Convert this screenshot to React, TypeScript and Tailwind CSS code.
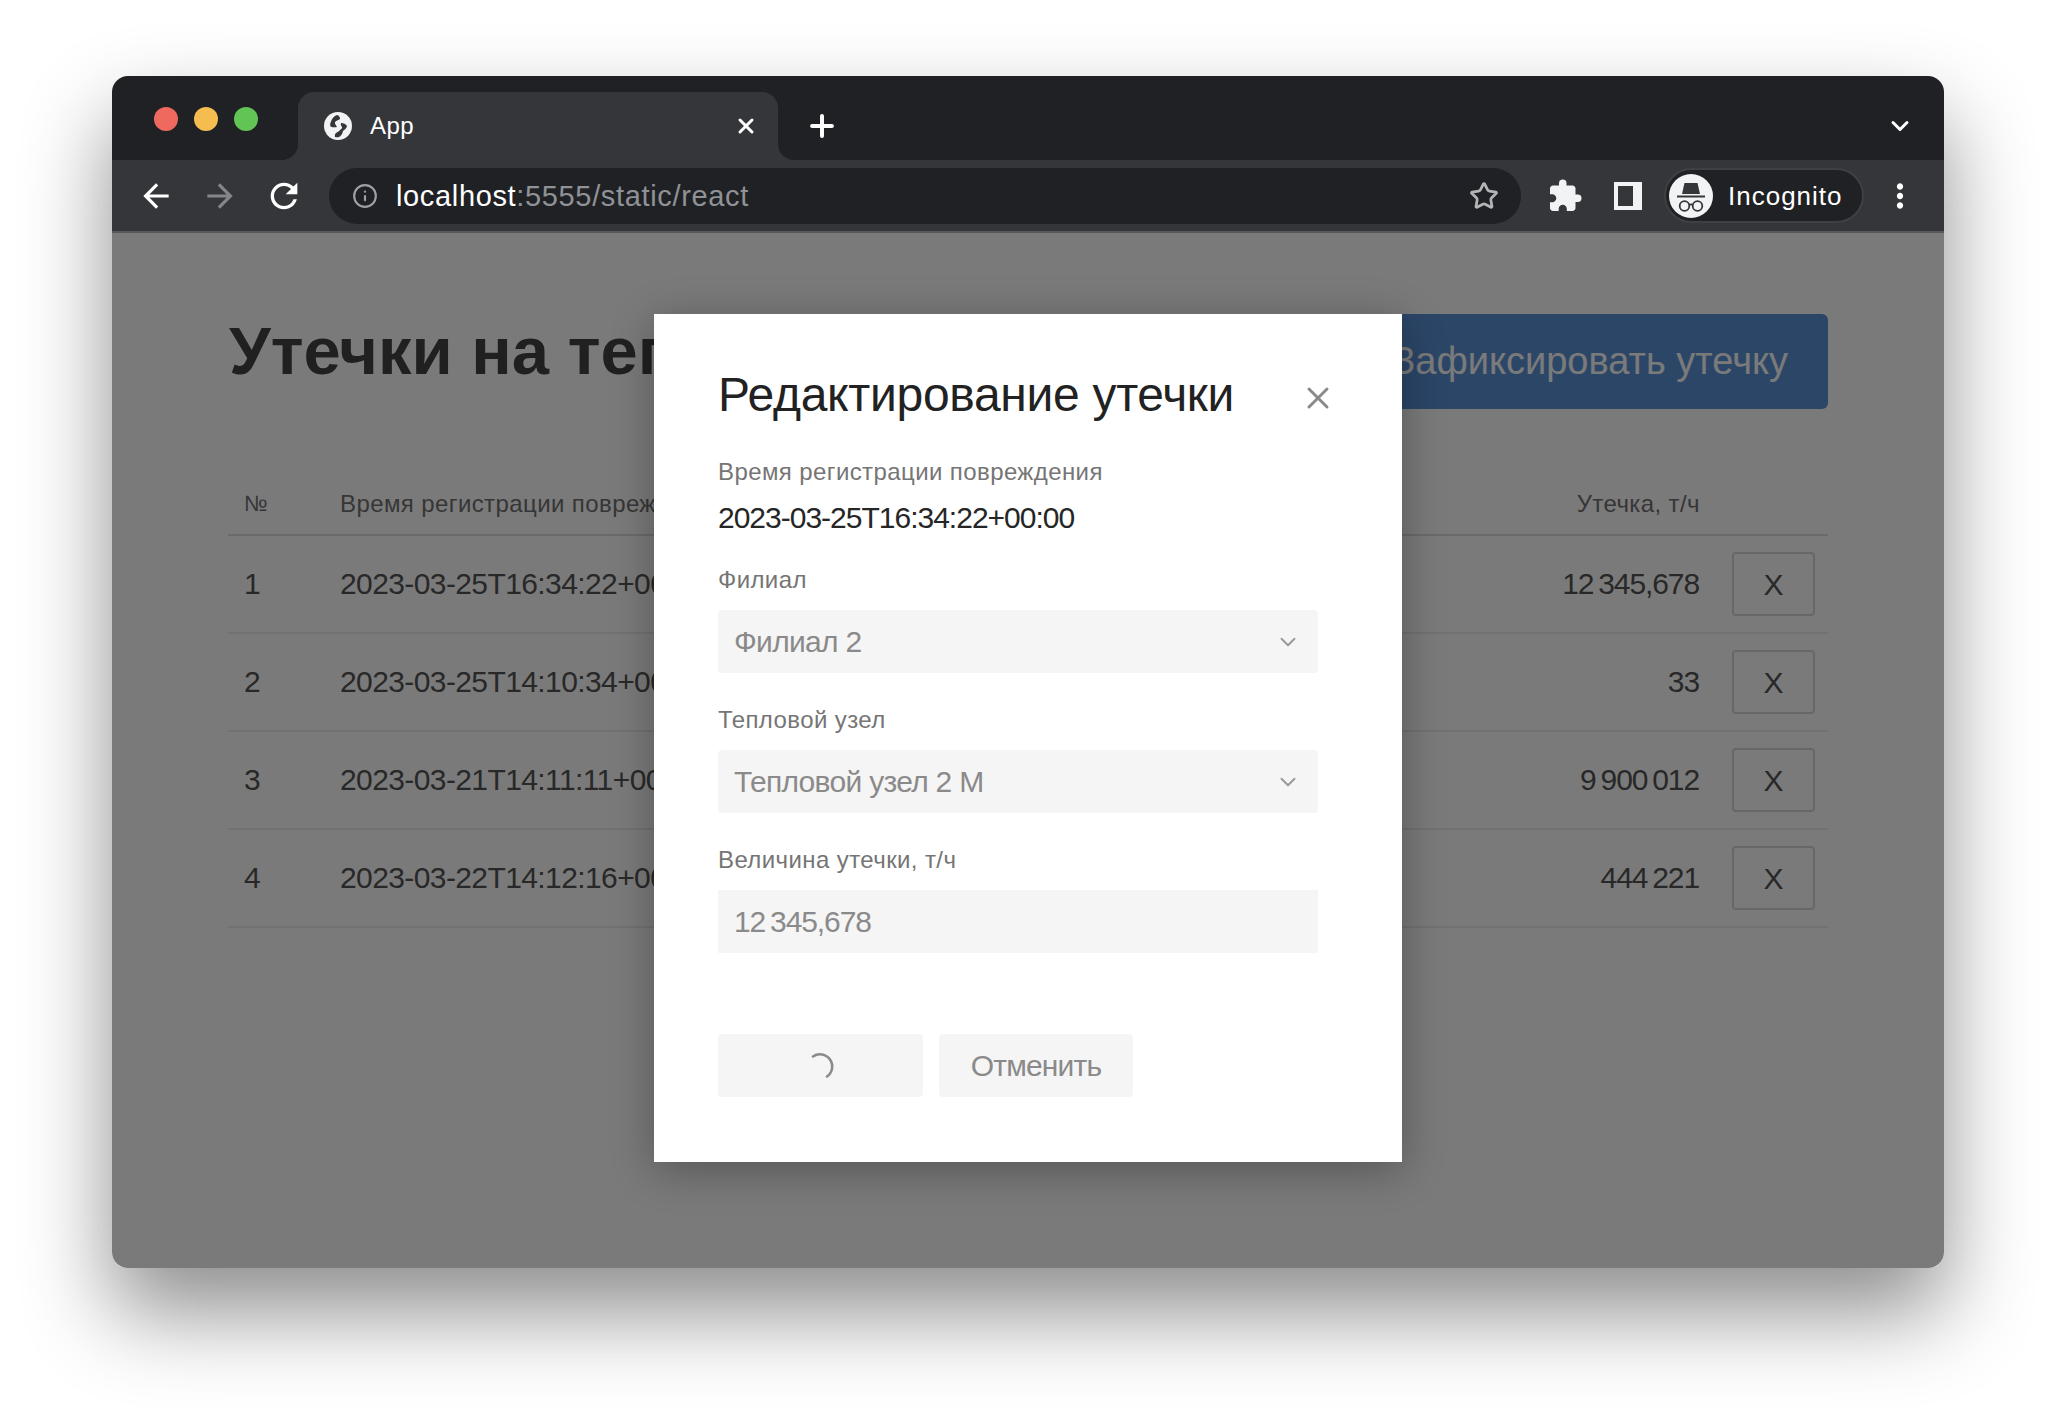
import { ChevronDown, Info, Plus, Star, X } from "lucide-react";
import { MdArrowBack, MdArrowForward, MdExtension, MdMoreVert, MdRefresh } from "react-icons/md";

const font = "[font-family:'Liberation_Sans',Arial,sans-serif]";

const rows = [
  { id: 1, time: "2023-03-25T16:34:22+00:00", leak: "12\u2009345,678" },
  { id: 2, time: "2023-03-25T14:10:34+00:00", leak: "33" },
  { id: 3, time: "2023-03-21T14:11:11+00:00", leak: "9\u2009900\u2009012" },
  { id: 4, time: "2023-03-22T14:12:16+00:00", leak: "444\u2009221" },
];

function GlobeIcon() {
  return (
    <svg width="28" height="28" viewBox="0 0 28 28" className="shrink-0">
      <circle cx="14" cy="14" r="14" fill="#f1f3f4" />
      <path d="M13 3C10 4 8 6.500 7 9.500 6 11.500 6 13.500 6.500 14.500 8.500 15.500 11.500 15.500 13 15 12 13 10.500 12 11 10 12.500 8.500 15 8 16 7 16 5 15 3.500 13 3Z" fill="#35363a" />
      <path d="M17 11C19.500 11 22 12 23 14 22.500 16.500 20.500 17.500 19 19 18.500 21.500 17.500 23 16 24.500 14 25.500 12 25.500 11 25 10.500 23.500 11 22 12 21 13.500 20 15.500 19 16 18 17.500 17 18.500 16 18 15 17 13.500 16.500 12.500 17 11Z" fill="#35363a" />
    </svg>
  );
}

function TabBar() {
  return (
    <div className="flex h-[84px] shrink-0 bg-[#202124]">
      <div className="flex w-[186px] items-start gap-4 pl-[42px] pt-[31px]">
        <span className="h-6 w-6 rounded-full bg-[#ee6a5f]" />
        <span className="h-6 w-6 rounded-full bg-[#f5bd4f]" />
        <span className="h-6 w-6 rounded-full bg-[#61c454]" />
      </div>
      <div className="relative mt-[16px] flex w-[480px] items-center rounded-t-[16px] bg-[#35363a] pl-[26px] pr-[20px] text-white">
        <span className="absolute -left-4 bottom-0 h-4 w-4 bg-[#35363a]">
          <span className="block h-4 w-4 rounded-br-[16px] bg-[#202124]" />
        </span>
        <span className="absolute -right-4 bottom-0 h-4 w-4 bg-[#35363a]">
          <span className="block h-4 w-4 rounded-bl-[16px] bg-[#202124]" />
        </span>
        <GlobeIcon />
        <span className="ml-[18px] flex-1 text-[24px] tracking-[0.5px]">App</span>
        <X size={24} strokeWidth={3} />
      </div>
      <div className="ml-[27px] mt-[16px] flex h-[68px] items-center">
        <Plus size={34} strokeWidth={2.8} className="text-white" />
      </div>
      <div className="ml-auto mr-[30px] mt-[16px] flex h-[68px] items-center">
        <ChevronDown size={28} strokeWidth={2.6} className="text-white" />
      </div>
    </div>
  );
}

function IncognitoAvatar() {
  return (
    <svg width="44" height="44" viewBox="0 0 44 44" className="shrink-0">
      <circle cx="22" cy="22" r="22" fill="#f1f3f4" />
      <path d="M15.500 9h13l2.500 11H13z" fill="#35363a" />
      <path d="M8 22.500h28" stroke="#35363a" strokeWidth="2.200" />
      <circle cx="15.500" cy="32" r="4.800" fill="none" stroke="#35363a" strokeWidth="1.800" />
      <circle cx="28.500" cy="32" r="4.800" fill="none" stroke="#35363a" strokeWidth="1.800" />
      <path d="M20 31c1.300-.8 2.700-.8 4 0" fill="none" stroke="#35363a" strokeWidth="1.800" />
    </svg>
  );
}

function Toolbar() {
  return (
    <div className="flex h-[73px] shrink-0 items-center border-b-2 border-[#58595b] bg-[#35363a] text-white">
      <MdArrowBack size={38} className="ml-[25px]" />
      <MdArrowForward size={38} className="ml-[26px] text-[#84858a]" />
      <MdRefresh size={40} className="ml-[25px]" />
      <div className="ml-[25px] flex h-[56px] w-[1192px] items-center rounded-full bg-[#202124] pl-[23px] pr-[22px]">
        <Info size={26} strokeWidth={2} className="text-[#9aa0a6]" />
        <span className="ml-[18px] flex-1 pt-[2px] text-[29px] tracking-[0.65px]">
          localhost<span className="text-[#8f9296]">:5555/static/react</span>
        </span>
        <Star size={30} strokeWidth={2.2} className="text-[#b4b5b7]" />
      </div>
      <MdExtension size={36} className="ml-[26px] text-[#f1f3f4]" />
      <div className="ml-[31px] h-7 w-7 border-y-[4px] border-l-[4px] border-r-[9px] border-[#f1f3f4] bg-[#35363a]" />
      <div className="ml-[22px] flex h-[55px] w-[200px] items-center rounded-full border-2 border-[#3f4043] bg-[#202124] pl-[3px]">
        <IncognitoAvatar />
        <span className="ml-[15px] text-[26px] leading-none tracking-[1px]">Incognito</span>
      </div>
      <MdMoreVert size={38} className="ml-[17px]" />
    </div>
  );
}

function LeakPage() {
  return (
    <div className="px-[116px] pt-[81px] text-[#333]">
      <div className="flex h-[95px] items-start justify-between">
        <h1 className="pl-px text-[67px] font-bold leading-[74px] text-[#1f1f1f]">Утечки на теплосети</h1>
        <button className="h-full rounded-[6px] bg-[#3d7dd2] px-[40px] text-[38px] text-white">Зафиксировать утечку</button>
      </div>
      <div className="mt-[66px] flex h-[61px] items-center border-b-2 border-[#d7d7d7] pb-[2px] pl-4 pr-[128px] text-[24px] tracking-[0.4px] text-[#555]">
        <span className="w-[96px] text-[22px]">№</span>
        <span className="flex-1">Время регистрации повреждения</span>
        <span>Утечка, т/ч</span>
      </div>
      {rows.map((row) => (
        <div key={row.id} className="flex h-[98px] items-center border-b-2 border-[#e8e8e8] pl-4 text-[30px]">
          <span className="w-[96px] pb-[2px]">{row.id}</span>
          <span className="flex-1 pb-[2px] tracking-[-0.6px]">{row.time}</span>
          <span className="pb-[2px] tracking-[-1.1px]">{row.leak}</span>
          <button className="ml-[33px] mr-[13px] h-[64px] w-[83px] rounded-[4px] border-2 border-[#d0d0d0] text-[30px]">X</button>
        </div>
      ))}
    </div>
  );
}

function FieldLabel({ children, className }: { children: string; className: string }) {
  return <div className={`text-[24px] leading-[36px] tracking-[0.4px] text-[#757575] ${className}`}>{children}</div>;
}

function SelectBox({ value }: { value: string }) {
  return (
    <div className="mt-[12px] flex h-[63px] items-center justify-between rounded-[4px] bg-[#f5f5f5] pl-4 pr-[17px] text-[30px] tracking-[-0.7px] text-[#8a8a8a]">
      {value}
      <ChevronDown size={26} strokeWidth={1.8} className="text-[#9a9a9a]" />
    </div>
  );
}

function EditModal() {
  return (
    <div className="absolute left-[542px] top-[81px] flex h-[848px] w-[748px] flex-col bg-white pl-[64px] pr-[84px] pt-[48px] shadow-[0_8px_40px_rgba(0,0,0,0.3)]">
      <div className="flex h-[66px] items-center justify-between">
        <h2 className="-mt-px text-[48px] tracking-[-0.3px] text-[#222]">Редактирование утечки</h2>
        <X size={36} strokeWidth={2} className="-mr-[18px] mt-[6px] text-[#8a8a8a]" />
      </div>
      <FieldLabel className="mt-[26px]">Время регистрации повреждения</FieldLabel>
      <div className="mt-[8px] text-[30px] leading-[40px] tracking-[-1px] text-[#262626]">2023-03-25T16:34:22+00:00</div>
      <FieldLabel className="mt-[24px]">Филиал</FieldLabel>
      <SelectBox value="Филиал 2" />
      <FieldLabel className="mt-[29px]">Тепловой узел</FieldLabel>
      <SelectBox value="Тепловой узел 2 М" />
      <FieldLabel className="mt-[29px]">Величина утечки, т/ч</FieldLabel>
      <div className="mt-[12px] flex h-[63px] items-center bg-[#f5f5f5] pl-4 text-[30px] tracking-[-1.1px] text-[#8a8a8a]">12{"\u2009"}345,678</div>
      <div className="mt-[81px] flex gap-4">
        <button className="flex h-[63px] w-[205px] items-center justify-center rounded-[4px] bg-[#f5f5f5]">
          <svg width="28" height="28" viewBox="0 0 28 28" fill="none">
            <path d="M6 4.500A12 12 0 0 1 20 24.500" stroke="#8a8a8a" strokeWidth="2.600" strokeLinecap="round" />
          </svg>
        </button>
        <button className="h-[63px] w-[194px] rounded-[4px] bg-[#f5f5f5] text-[30px] tracking-[-0.8px] text-[#8a8a8a]">Отменить</button>
      </div>
    </div>
  );
}

export default function App() {
  return (
    <div className={`h-[1416px] w-[2056px] overflow-hidden bg-white pl-[112px] pt-[76px] ${font}`}>
      <div className="flex h-[1192px] w-[1832px] flex-col overflow-hidden rounded-[16px] shadow-[0_44px_88px_rgba(0,0,0,0.45)]">
        <TabBar />
        <Toolbar />
        <div className="relative flex-1 overflow-hidden bg-white">
          <LeakPage />
          <div className="absolute inset-0 bg-[#212121]/60" />
          <EditModal />
        </div>
      </div>
    </div>
  );
}
